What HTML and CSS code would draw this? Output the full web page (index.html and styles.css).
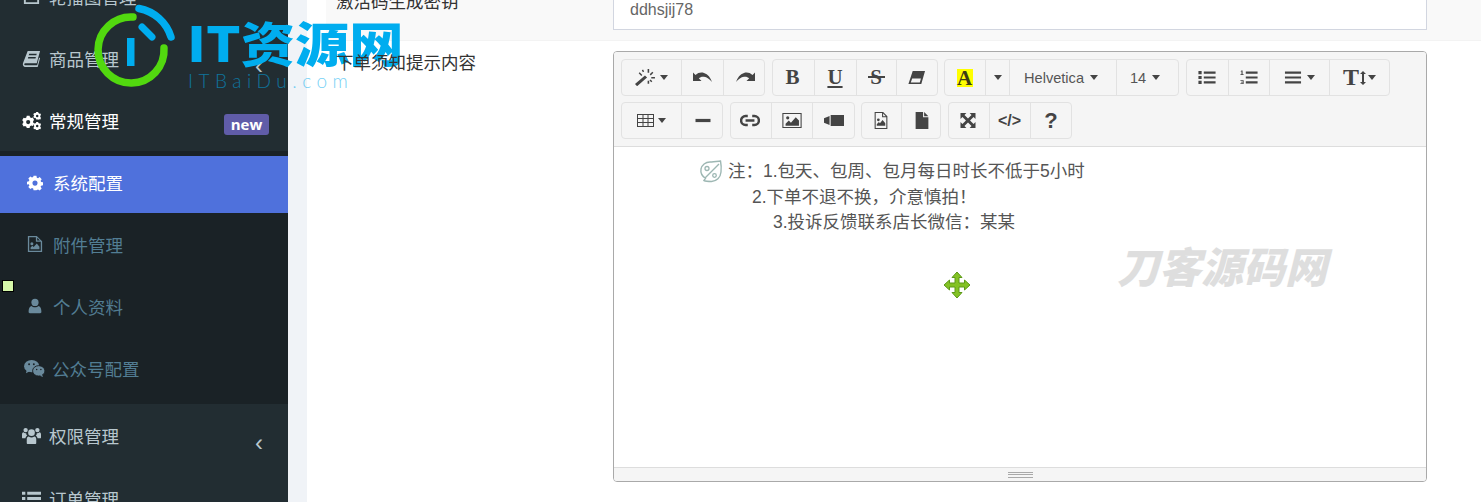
FILE: index.html
```html
<!DOCTYPE html>
<html lang="en">
<head>
  <meta charset="UTF-8">
  <title>系统配置</title>
  <link rel="stylesheet" href="styles.css">
</head>
<body>
  <svg class="defs" width="0" height="0">
    <symbol id="i-cog" viewBox="0 0 20 20"><path fill-rule="evenodd" d="M8 1h4l.5 2.600 1.700.7 2.200-1.500 2.800 2.800-1.500 2.200.7 1.700 2.600.5v4l-2.600.5-.7 1.700 1.500 2.200-2.800 2.800-2.200-1.500-1.700.7L12 21H8l-.5-2.600-1.700-.7-2.200 1.500-2.800-2.800 1.500-2.200-.7-1.700L-1 13V9l2.600-.5.7-1.700-1.500-2.200 2.800-2.800 2.200 1.500 1.700-.7zM10 7.500a3.500 3.500 0 1 0 0 7 3.500 3.500 0 0 0 0-7z" transform="translate(.9 .1) scale(.91)"/></symbol>
  </svg>

  <div class="page">
    <aside class="sidebar">
      <ul class="menu">
        <li class="menu-item">
          <svg class="ico" viewBox="0 0 20 20"><path fill="none" stroke="currentColor" stroke-width="2" d="M3 2h14v15H3zM3 6h14"/></svg>
          <span>轮播图管理</span>
        </li>
        <li class="menu-item">
          <svg class="ico" viewBox="0 0 20 20"><path d="M6 2h13l-3.500 13H3.500c-1 0-1.500 1-1 1.500.3.400 1 .500 1.500.500h12l2-8 1 .7L16.500 19H3.500C1.500 19 .5 17 1 15zM7.500 5l-.4 1.500h8l.4-1.500zM6.600 8.500l-.4 1.500h8l.4-1.500z"/></svg>
          <span>商品管理</span>
          <span class="chev">‹</span>
        </li>
        <li class="menu-item active">
          <svg class="ico" viewBox="0 0 20 20"><path fill-rule="evenodd" d="M5 5h3l.4 1.500 1.400.8 1.500-.5 1.500 2.600-1.100 1.100v1.600l1.100 1.100-1.500 2.600-1.500-.5-1.400.8L8 18H5l-.4-1.500-1.400-.8-1.500.5L.2 13.600l1.100-1.100v-1.600L.2 9.800l1.500-2.600 1.500.5 1.400-.8zM6.500 9.500a2.200 2.200 0 1 0 0 4.400 2.200 2.200 0 0 0 0-4.400z"/><path fill-rule="evenodd" d="M15 1h2l.3 1.200 1.100.6 1-.3.600 1.800-.8.800v1.200l.8.800-.6 1.800-1-.3-1.100.6L17 9h-2l-.3-1.200-1.100-.6-1 .3-.6-1.800.8-.8V4.700l-.8-.8.600-1.800 1 .3 1.100-.6zM16 4a1.300 1.300 0 1 0 0 2.600A1.300 1.300 0 0 0 16 4zM15 11.500h2l.3 1.100 1.100.6 1-.3.600 1.800-.8.800v1.200l.8.800-.6 1.800-1-.3-1.100.6-.3 1.100h-2l-.3-1.100-1.100-.6-1 .3-.6-1.800.8-.8v-1.200l-.8-.8.600-1.800 1 .3 1.100-.6zm1 3a1.300 1.300 0 1 0 0 2.600 1.300 1.300 0 0 0 0-2.600z"/></svg>
          <span>常规管理</span>
          <span class="badge">new</span>
        </li>
        <li>
          <ul class="submenu">
            <li class="sub-item current">
              <svg class="ico small"><use href="#i-cog"/></svg>
              <span>系统配置</span>
            </li>
            <li class="sub-item">
              <svg class="ico small" viewBox="0 0 18 20"><path fill-rule="evenodd" d="M1 1h10l6 6v12H1zm1.500 1.500v15h13v-10H10v-5zM11.500 3v3h3zM5.500 8a1.700 1.700 0 1 1 0 3.400 1.700 1.700 0 0 1 0-3.400zM4 16v-2l2-2 1.500 1.500 3.500-4 3 3.500v3z"/></svg>
              <span>附件管理</span>
            </li>
            <li class="sub-item">
              <svg class="ico small" viewBox="0 0 20 20"><circle cx="10" cy="5.500" r="4.500"/><path d="M3.500 19c-.8 0-1.500-.6-1.500-1.500 0-4 1-7 3.500-7.500 1 1 2.800 1.700 4.500 1.700s3.500-.7 4.500-1.700c2.500.5 3.500 3.500 3.500 7.500 0 .9-.7 1.500-1.500 1.500z"/></svg>
              <span>个人资料</span>
            </li>
            <li class="sub-item">
              <svg class="ico wide" viewBox="0 0 22 20"><ellipse cx="8" cy="7.500" rx="8" ry="6.500"/><path d="M3 11l-1 4 4.500-2.500z"/><ellipse cx="15.500" cy="12.500" rx="6.500" ry="5.500" stroke="#1a2226" stroke-width="1"/><path d="M19 16.500l1 2.500-3.500-1.500z"/><circle cx="5.300" cy="5.500" r="1" fill="#1a2226"/><circle cx="10.300" cy="5.500" r="1" fill="#1a2226"/><circle cx="13.300" cy="11" r=".8" fill="#1a2226"/><circle cx="17.700" cy="11" r=".8" fill="#1a2226"/></svg>
              <span>公众号配置</span>
            </li>
          </ul>
        </li>
        <li class="menu-item lower">
          <svg class="ico" viewBox="0 0 20 20"><circle cx="10" cy="7" r="3.500"/><circle cx="3.800" cy="4.300" r="2.300"/><circle cx="16.200" cy="4.300" r="2.300"/><path d="M5 18v-4c0-2 1-3 2-3 1 .8 2 1.200 3 1.200s2-.4 3-1.200c1 0 2 1 2 3v4c0 .6-.5 1-1 1H6c-.5 0-1-.4-1-1zM0 12V9c0-1.500.8-2.300 1.700-2.300.6.600 1.300 1 2.100 1 .3 0 .4 0 .6-.1 0 1 .4 2 1.200 2.700-1 .3-1.800 1.300-2 2.700H1c-.6 0-1-.4-1-1zM20 12V9c0-1.500-.8-2.300-1.700-2.300-.6.600-1.300 1-2.100 1-.3 0-.4 0-.6-.1 0 1-.4 2-1.200 2.700 1 .3 1.800 1.300 2 2.700h2.600c.6 0 1-.4 1-1z"/></svg>
          <span>权限管理</span>
          <span class="chev">‹</span>
        </li>
        <li class="menu-item">
          <svg class="ico" viewBox="0 0 20 20"><path d="M0 3h3.500v3H0zM5.500 3H20v3H5.500zM0 8.500h3.500v3H0zM5.500 8.500H20v3H5.500zM0 14h3.500v3H0zM5.500 14H20v3H5.500z"/></svg>
          <span>订单管理</span>
          <span class="chev">‹</span>
        </li>
      </ul>
    </aside>

    <main class="content">
      <div class="form-row first">
        <label class="form-label">激活码生成密钥</label>
        <div class="form-field">
          <div class="text-input">ddhsjij78</div>
        </div>
      </div>

      <div class="form-row">
        <label class="form-label">下单须知提示内容</label>
        <div class="form-field">
          <div class="editor">
            <div class="toolbar">
              <div class="btn-group">
                <button class="btn w60"><svg class="ti magic" viewBox="0 0 20 16"><path d="M0 14.300L9.500 6l2 2L2 16.300zM6.500 1l1.200-.6 1 2-1.200.6zM12 0h1.500v3.500H12zM16.500 2.500l1 1-2.500 2.500-1-1zM15.500 7.500H19V9h-3.500zM12 11h1.500v3H12zM6 6.500L3.500 4l1-1L7 5.500zM15.500 12.500L13.800 10.800l1-1 1.700 1.700z"/></svg><i class="caret"></i></button>
                <button class="btn w42"><svg class="ti" viewBox="0 0 20 14"><path d="M0 2l2.500 2.500C5 2.300 8 1.500 11 2.500c4 1.300 6.500 4.500 8 9-2.500-3-5-4.800-8-5.200-2-.3-3.800.2-5.200 1.500L8.500 10.500H0z"/></svg></button>
                <button class="btn w42"><svg class="ti" viewBox="0 0 20 14"><path d="M20 2l-2.500 2.500C15 2.300 12 1.500 9 2.500c-4 1.300-6.500 4.500-8 9 2.500-3 5-4.800 8-5.200 2-.3 3.800.2 5.200 1.500l-2.700 2.700H20z"/></svg></button>
              </div>
              <div class="btn-group">
                <button class="btn w42 serif">B</button>
                <button class="btn w42 serif under">U</button>
                <button class="btn w40 serif strike">S</button>
                <button class="btn w42"><svg class="ti" viewBox="0 0 16 14"><path d="M4 1h11.500l-3.500 12H0zM3.500 8l-1.300 3.700h8.400l1.100-3.700z" fill-rule="evenodd"/></svg></button>
              </div>
              <div class="btn-group">
                <button class="btn w41"><span class="mark">A</span></button>
                <button class="btn w24"><i class="caret solo"></i></button>
                <button class="btn w107 plain font-name">Helvetica<i class="caret wide-gap"></i></button>
                <button class="btn w63 plain font-size">14<i class="caret wide-gap"></i></button>
              </div>
              <div class="btn-group">
                <button class="btn w42"><svg class="ti" viewBox="0 0 16 14"><path d="M0 1h3v3H0zM5 1.500h11v2H5zM0 5.500h3v3H0zM5 6h11v2H5zM0 10h3v3H0zM5 10.500h11v2H5z"/></svg></button>
                <button class="btn w41"><svg class="ti" viewBox="0 0 16 14"><path d="M1 .5h1v3.500h1v.7H0V4h1V1.500H0zM5 1.500h11v2H5zM5 6h11v2H5zM5 10.500h11v2H5zM0 9.500h3v3.500H0v-.7h2.200v-.7H.6v-.7h1.600v-.7H0z"/></svg></button>
                <button class="btn w60"><svg class="ti" viewBox="0 0 16 14"><path d="M.5 1.500h15v2H.5zM.5 6h15v2H.5zM.5 10.500h15v2H.5z"/></svg><i class="caret"></i></button>
                <button class="btn w62 serif big-t">T<svg class="arrows" viewBox="0 0 6 14"><path d="M3 0l3 3H4v8h2l-3 3-3-3h2V3H0z"/></svg><i class="caret tight"></i></button>
              </div>
              <div class="btn-group">
                <button class="btn w60"><svg class="ti table" viewBox="0 0 17 13"><path fill-rule="evenodd" d="M0 0h17v13H0zm1 1v3h4.500V1zm5.500 0v3h4V1zm5 0v3H16V1zM1 5v3h4.500V5zm5.500 0v3h4V5zm5 0v3H16V5zM1 9v3h4.500V9zm5.500 0v3h4V9zm5 0v3H16V9z"/></svg><i class="caret"></i></button>
                <button class="btn w42"><svg class="ti" viewBox="0 0 14 14"><path d="M0 5.500h14v3H0z"/></svg></button>
              </div>
              <div class="btn-group">
                <button class="btn w41"><svg class="ti" viewBox="0 0 18 12"><path fill="none" stroke="currentColor" stroke-width="2.200" d="M7 2H5a4 4 0 0 0 0 8h2M11 2h2a4 4 0 0 1 0 8h-2M5 6h8"/></svg></button>
                <button class="btn w41"><svg class="ti" viewBox="0 0 18 14"><path fill-rule="evenodd" d="M0 0h18v14H0zm1 1v12h16V1zM5 3a1.500 1.500 0 1 1 0 3 1.500 1.500 0 0 1 0-3zM3 12v-2l3-3 2 2 4.500-5L15.500 7v5z"/></svg></button>
                <button class="btn w43"><svg class="ti" viewBox="0 0 18 12"><path d="M6 1h12v10H6zM0 4l5-2v8L0 8z"/></svg></button>
              </div>
              <div class="btn-group">
                <button class="btn w40"><svg class="ti tall" viewBox="0 0 12 16"><path fill-rule="evenodd" d="M0 0h8l4 4v12H0zm1 1v14h10V5H7V1zM8 1.500V4h2.500zM3.500 6a1.300 1.300 0 1 1 0 2.600 1.300 1.300 0 0 1 0-2.600zM2 13v-1.500l2-2 1 1 2.500-3L10 10.500V13z"/></svg></button>
                <button class="btn w40"><svg class="ti tall" viewBox="0 0 12 16"><path d="M0 0h7v5h5v11H0zM8 0l4 4H8z"/></svg></button>
              </div>
              <div class="btn-group">
                <button class="btn w41"><svg class="ti" viewBox="0 0 14 14"><path d="M0 0h5.500L3.700 1.800 7 5.100l3.300-3.300L8.500 0H14v5.500l-1.800-1.800L8.900 7l3.300 3.300L14 8.500V14H8.500l1.800-1.800L7 8.900l-3.300 3.300L5.500 14H0V8.500l1.800 1.800L5.100 7 1.800 3.700 0 5.500z"/></svg></button>
                <button class="btn w41 code">&lt;/&gt;</button>
                <button class="btn w42 help">?</button>
              </div>
            </div>
            <div class="editor-body">
              <p class="note-line first-line">
                <svg class="planet" viewBox="0 0 24 24"><path fill="none" stroke="#9db7b3" stroke-width="1.400" d="M5 20.500l1.500-2.200C3 16 1.500 12 2 9c.8-4 4.500-7 9-7 3 0 6.500-.5 10.500-1 .8 4 .8 8 .5 11-.5 5.500-4.500 9.500-9.500 9.500-3 0-5.500 0-7.500-1zM6 18L20 4"/><circle cx="8" cy="8.500" r="2" fill="none" stroke="#9db7b3" stroke-width="1.300"/><circle cx="15.500" cy="15.500" r="1.800" fill="none" stroke="#9db7b3" stroke-width="1.300"/></svg>
                注&#xFF1A;1.包天、包周、包月每日时长不低于5小时
              </p>
              <p class="note-line second-line">2.下单不退不换&#xFF0C;介意慎拍&#xFF01;</p>
              <p class="note-line third-line">3.投诉反馈联系店长微信&#xFF1A;某某</p>
              <span class="watermark">刀客源码网</span>
              <svg class="move-cursor" viewBox="0 0 28 28"><path fill="#84c225" stroke="#5c9a18" stroke-width="1" d="M14 1l5 5.500h-3V12h5.500V9l5.500 5-5.500 5v-3H16v5.500h3L14 27l-5-5.500h3V16H6.500v3L1 14l5.500-5v3H12V6.500H9z"/></svg>
            </div>
            <div class="resize-bar"><span class="grip"></span></div>
          </div>
        </div>
      </div>
    </main>

    <div class="logo">
      <svg class="logo-mark" viewBox="0 0 90 90">
        <path fill="none" stroke="#52d80f" stroke-width="7.500" stroke-linecap="round" d="M41 17A33 33 0 1 0 72 48"/>
        <path fill="none" stroke="#00adef" stroke-width="7.500" stroke-linecap="round" d="M47 8.500A41.500 41.500 0 0 1 79 37"/>
        <path fill="none" stroke="#00adef" stroke-width="7" stroke-linecap="round" d="M50 27l10 10"/>
        <path fill="#00adef" d="M35 38h7.500v28H35z"/>
      </svg>
      <div class="logo-name">IT资源网</div>
      <div class="logo-url">ITBaiDu.com</div>
    </div>
    <span class="pin"></span>
  </div>
</body>
</html>
```

FILE: styles.css
```css
* {
  box-sizing: border-box;
}

html, body {
  margin: 0;
  height: 502px;
  overflow: hidden;
}

body {
  background: #f0f3f7;
  font-family: "Liberation Sans", "Noto Sans CJK SC", sans-serif;
  font-size: 17.5px;
  color: #333;
}

.defs {
  position: absolute;
}

.page {
  position: relative;
  display: flex;
  height: 502px;
  overflow: hidden;
}

/* Sidebar */
.sidebar {
  width: 288px;
  flex: none;
  background: #222d32;
  color: #b8c7ce;
}

.menu, .submenu {
  list-style: none;
  margin: 0;
  padding: 0;
}

.menu {
  margin-top: -35px;
}

.menu-item {
  display: flex;
  align-items: center;
  height: 62px;
  padding-left: 22px;
  position: relative;
}

.menu-item.active {
  color: #fff;
}

.menu-item.lower {
  height: 63px;
}

.ico {
  width: 19px;
  height: 19px;
  margin-right: 8px;
  fill: currentColor;
  flex: none;
}

.chev {
  position: absolute;
  left: 255px;
  top: 27px;
  font-size: 24px;
  line-height: 24px;
}

.badge {
  margin-left: auto;
  margin-right: 19px;
  margin-top: 8px;
  width: 45px;
  height: 21px;
  border-radius: 3px;
  background: #605ca8;
  color: #fff;
  font-family: "Open Sans", sans-serif;
  font-weight: 700;
  font-size: 15px;
  line-height: 20px;
  text-align: center;
}

.submenu {
  background: #1a2226;
  padding: 5px 0;
}

.sub-item {
  display: flex;
  align-items: center;
  height: 62px;
  padding-left: 27px;
  color: #527d93;
}

.sub-item .ico {
  color: #6a8a9c;
}

.sub-item.current {
  height: 57px;
  padding-bottom: 4px;
  background: #4f71dc;
  color: #fff;
}

.sub-item.current .ico {
  color: #fff;
}

.ico.small {
  width: 16px;
  height: 18px;
  margin-right: 10px;
}

.ico.wide {
  width: 21px;
  height: 19px;
  margin-left: -3px;
  margin-right: 7px;
}

/* Form */
.content {
  flex: 1;
  margin-left: 19px;
  background: #fff;
}

.form-row {
  display: flex;
  padding-left: 29px;
  padding-right: 54px;
}

.form-row.first {
  height: 47px;
  margin-top: -6px;
  margin-left: 19px;
  padding-left: 10px;
  background: #f9f9f9;
  border-bottom: 1px solid #f3f3f3;
}

/* sits above the overlaid logo, as in the page */
.form-label {
  position: relative;
  z-index: 1;
  width: 277px;
  flex: none;
  color: #333;
  line-height: 25px;
}

.form-row.first .form-label {
  margin-top: -4px;
}

.form-row:not(.first) .form-label {
  margin-top: 10px;
}

.form-field {
  flex: 1;
}

.text-input {
  height: 36px;
  padding-left: 16px;
  background: #fff;
  border: 1px solid #d2d6e0;
  border-top: 0;
  color: #666;
  font-size: 16px;
  line-height: 32px;
}

/* Editor */
.editor {
  height: 431px;
  margin-top: 10px;
  border: 1px solid #a9a9a9;
  border-radius: 4px;
  display: flex;
  flex-direction: column;
}

.toolbar {
  height: 95px;
  padding: 7px 0 0 7px;
  background: #f5f5f5;
  border-bottom: 1px solid #ddd;
  border-radius: 3px 3px 0 0;
  display: flex;
  flex-wrap: wrap;
  align-content: flex-start;
  column-gap: 6.500px;
  row-gap: 6px;
}

.btn-group {
  display: flex;
  height: 37px;
  border: 1px solid #e2e2e2;
  border-radius: 4px;
}

.btn {
  display: flex;
  align-items: center;
  justify-content: center;
  position: relative;
  height: 35px;
  padding: 0;
  border: 0;
  border-left: 1px solid #e2e2e2;
  background: transparent;
  color: #444;
  fill: #444;
  font-family: "Liberation Sans", sans-serif;
  font-size: 14px;
}

.btn:first-child {
  border-left: 0;
  margin-left: -1px;
}

.btn:last-child {
  margin-right: -1px;
}

.w24 { width: 24px; }
.w40 { width: 40px; }
.w41 { width: 41px; }
.w42 { width: 42px; }
.w43 { width: 43px; }
.w60 { width: 60px; }
.w62 { width: 61px; }
.w63 { width: 63px; }
.w107 { width: 107px; }

.ti {
  width: 20px;
  height: 15px;
}

.ti.magic {
  width: 21px;
  height: 17px;
}

.ti.table {
  width: 17px;
  height: 13px;
}

.ti.tall {
  width: 14px;
  height: 17px;
}

.caret {
  display: inline-block;
  width: 0;
  height: 0;
  margin-left: 4px;
  border-top: 5px solid #444;
  border-left: 4px solid transparent;
  border-right: 4px solid transparent;
}

.caret.solo {
  margin-left: 0;
}

.caret.tight {
  margin-left: 2px;
}

.caret.wide-gap {
  margin-left: 6px;
}

.serif {
  font-family: "Liberation Serif", serif;
  font-weight: 700;
  font-size: 21px;
}

.under {
  text-decoration: underline;
  text-decoration-thickness: 1.500px;
  text-underline-offset: 2px;
}

.strike::after {
  content: "";
  position: absolute;
  left: 11px;
  right: 11px;
  top: 16px;
  height: 2px;
  background: #444;
}

.big-t {
  font-size: 24px;
}

.arrows {
  width: 6px;
  height: 14px;
  margin-left: 1px;
}

.mark {
  width: 16px;
  height: 18px;
  background: #ffff00;
  font-family: "Liberation Serif", serif;
  font-weight: 700;
  font-size: 21px;
  line-height: 19px;
  color: #3c3c14;
  text-align: center;
}

.plain {
  font-size: 14.600px;
  color: #555;
}

.font-name {
  padding-right: 4px;
}

.font-size {
  padding-right: 6px;
}

.code {
  font-size: 16px;
  font-weight: 700;
}

.help {
  font-size: 22px;
  font-weight: 700;
}

.editor-body {
  flex: 1;
  position: relative;
  background: #fff;
  padding-top: 12px;
  color: #555;
  overflow: hidden;
}

.note-line {
  margin: 0;
  line-height: 25.500px;
  white-space: nowrap;
  color: #555;
}

.first-line {
  padding-left: 85px;
  display: flex;
  align-items: center;
}

.second-line {
  padding-left: 138px;
}

.third-line {
  padding-left: 159px;
}

.planet {
  width: 24px;
  height: 24px;
  margin-right: 5px;
  flex: none;
}

.watermark {
  position: absolute;
  left: 503px;
  top: 93px;
  color: #dedede;
  font-family: "Noto Sans CJK SC", sans-serif;
  font-size: 42px;
  line-height: 50px;
  font-weight: 900;
  font-style: italic;
  white-space: nowrap;
}

.move-cursor {
  position: absolute;
  left: 329px;
  top: 124px;
  width: 28px;
  height: 28px;
}

.resize-bar {
  height: 14px;
  background: #f5f5f5;
  border-top: 1px solid #ddd;
  border-radius: 0 0 3px 3px;
  display: flex;
  justify-content: center;
  align-items: center;
}

.grip {
  width: 25px;
  height: 6px;
  border-top: 1px solid #a9a9a9;
  border-bottom: 1px solid #a9a9a9;
  position: relative;
}

.grip::after {
  content: "";
  position: absolute;
  left: 0;
  right: 0;
  top: 1px;
  border-top: 1px solid #a9a9a9;
}

/* Overlaid site logo and marker */
.logo {
  position: absolute;
  left: 0;
  top: 0;
  color: #00adef;
}

.logo-mark {
  position: absolute;
  left: 92px;
  top: 0;
  width: 90px;
  height: 90px;
}

.logo-name {
  position: absolute;
  left: 187px;
  top: 4px;
  font-family: "Noto Sans CJK SC", sans-serif;
  font-size: 48px;
  line-height: 74px;
  font-weight: 900;
  white-space: nowrap;
  transform: scaleX(1.13);
  transform-origin: left center;
}

.logo-url {
  position: absolute;
  left: 188px;
  top: 70px;
  font-family: Lato, sans-serif;
  font-weight: 300;
  font-size: 19px;
  line-height: 22px;
  letter-spacing: 5.500px;
  opacity: .55;
  white-space: nowrap;
}

.pin {
  position: absolute;
  left: 2px;
  top: 280px;
  width: 12px;
  height: 12px;
  background: #d5f7a9;
  border: 1px solid #000;
}
```
